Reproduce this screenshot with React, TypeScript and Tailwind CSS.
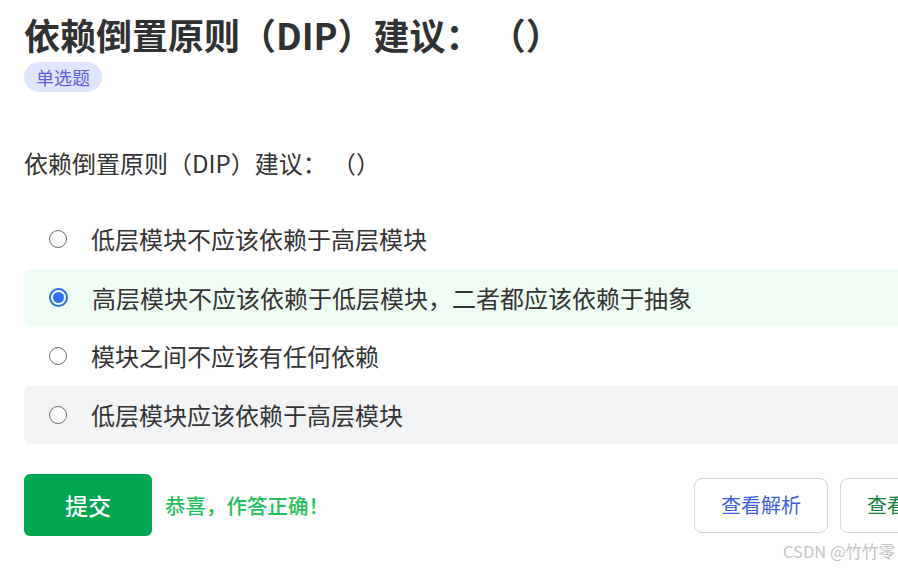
import { useState } from 'react';

const options = [
  '低层模块不应该依赖于高层模块',
  '高层模块不应该依赖于低层模块，二者都应该依赖于抽象',
  '模块之间不应该有任何依赖',
  '低层模块应该依赖于高层模块',
];

function Radio({ checked }: { checked: boolean }) {
  if (checked) {
    return (
      <span className="w-[19px] h-[19px] rounded-full border-2 border-[#2f6ff5] flex items-center justify-center shrink-0">
        <span className="w-[11px] h-[11px] rounded-full bg-[#2f6ff5]" />
      </span>
    );
  }
  return <span className="w-[18px] h-[18px] rounded-full border-[1.5px] border-[#6b6b6b] bg-white shrink-0" />;
}

function App() {
  const [selected] = useState(1);
  const hovered = 3;

  return (
    <div
      className="relative w-[898px] h-[568px] overflow-hidden bg-white text-[#333]"
      style={{ fontFamily: '"Noto Sans CJK SC", "Noto Sans", sans-serif' }}
    >
      <div className="w-[950px] ml-6">
        <h1 className="text-[36px] leading-[40px] font-bold text-[#303133] pt-[14px]">
          依赖倒置原则（DIP）建议： （）
        </h1>
        <span className="inline-flex items-center mt-[8px] h-[30px] px-[12px] rounded-full bg-[#e0e4fc] text-[#5b5fe0] text-[18px]">
          单选题
        </span>

        <p className="mt-[55px] text-[24px] leading-[32px] text-[#333]">依赖倒置原则（DIP）建议： （）</p>

        <div className="mt-[31px] flex flex-col">
          {options.map((opt, i) => (
            <div
              key={i}
              className={
                'h-[58.5px] flex items-center pl-[25px] gap-[24px] rounded-md ' +
                (i === selected ? 'bg-[#f0fdf4]' : i === hovered ? 'bg-[#f2f3f5]' : 'bg-white')
              }
            >
              <Radio checked={i === selected} />
              <span className="text-[24px] text-[#333]">{opt}</span>
            </div>
          ))}
        </div>

        <div className="mt-[30px] flex items-center">
          <button className="w-[128px] h-[62px] rounded-md bg-[#00a650] text-white text-[23px] font-medium">提交</button>
          <span className="ml-[13px] text-[20.5px] font-medium text-[#1ec15b]">恭喜，作答正确！</span>
          <div className="ml-auto flex gap-3">
            <button className="w-[134px] h-[55px] rounded-lg border border-[#d4d6de] text-[20px] text-[#3f5fe0]">
              查看解析
            </button>
            <button className="w-[134px] h-[55px] rounded-lg border border-[#d4d6de] text-[20px] text-[#15803d]">
              查看答案
            </button>
          </div>
        </div>
      </div>

      <span className="absolute right-[3px] bottom-[4px] text-[16.5px] text-[#c4c4c4]">CSDN @竹竹零</span>
    </div>
  );
}

export default App;
